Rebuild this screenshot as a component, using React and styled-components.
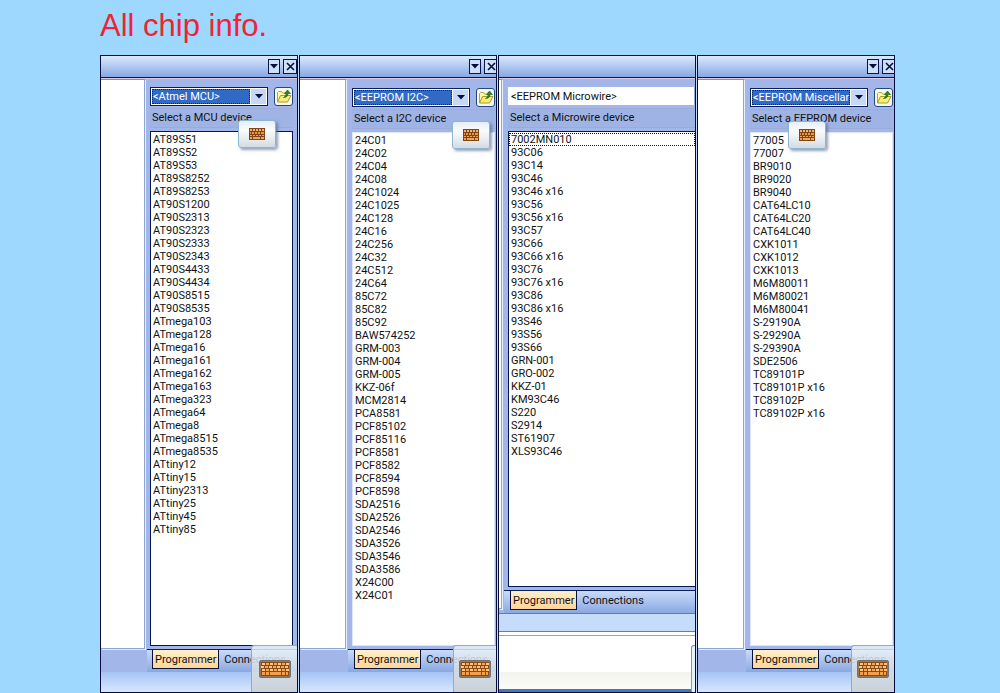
import styled, { createGlobalStyle } from 'styled-components';

const atmel = ['AT89S51', 'AT89S52', 'AT89S53', 'AT89S8252', 'AT89S8253', 'AT90S1200', 'AT90S2313', 'AT90S2323', 'AT90S2333', 'AT90S2343', 'AT90S4433', 'AT90S4434', 'AT90S8515', 'AT90S8535', 'ATmega103', 'ATmega128', 'ATmega16', 'ATmega161', 'ATmega162', 'ATmega163', 'ATmega323', 'ATmega64', 'ATmega8', 'ATmega8515', 'ATmega8535', 'ATtiny12', 'ATtiny15', 'ATtiny2313', 'ATtiny25', 'ATtiny45', 'ATtiny85'];
const i2c = ['24C01', '24C02', '24C04', '24C08', '24C1024', '24C1025', '24C128', '24C16', '24C256', '24C32', '24C512', '24C64', '85C72', '85C82', '85C92', 'BAW574252', 'GRM-003', 'GRM-004', 'GRM-005', 'KKZ-06f', 'MCM2814', 'PCA8581', 'PCF85102', 'PCF85116', 'PCF8581', 'PCF8582', 'PCF8594', 'PCF8598', 'SDA2516', 'SDA2526', 'SDA2546', 'SDA3526', 'SDA3546', 'SDA3586', 'X24C00', 'X24C01'];
const microwire = ['7002MN010', '93C06', '93C14', '93C46', '93C46 x16', '93C56', '93C56 x16', '93C57', '93C66', '93C66 x16', '93C76', '93C76 x16', '93C86', '93C86 x16', '93S46', '93S56', '93S66', 'GRN-001', 'GRO-002', 'KKZ-01', 'KM93C46', 'S220', 'S2914', 'ST61907', 'XLS93C46'];
const misc = ['77005', '77007', 'BR9010', 'BR9020', 'BR9040', 'CAT64LC10', 'CAT64LC20', 'CAT64LC40', 'CXK1011', 'CXK1012', 'CXK1013', 'M6M80011', 'M6M80021', 'M6M80041', 'S-29190A', 'S-29290A', 'S-29390A', 'SDE2506', 'TC89101P', 'TC89101P x16', 'TC89102P', 'TC89102P x16'];

const Keyboard = () => (
  <svg width="32" height="18" viewBox="0 0 32 18" aria-hidden="true">
    <rect x="0.5" y="0.5" width="31" height="17" rx="1.5" fill="#93775a" stroke="#6f7278" />
    <rect x="2" y="2" width="28" height="14" fill="#8a4a16" />
    {[0, 1, 2].map((r) =>
      [0, 1, 2, 3, 4, 5, 6].map((c) => (
        <rect key={`${r}-${c}`} x={3 + c * 4 - (r % 2)} y={3 + r * 3} width="3" height="2" fill={c % 2 ? '#f6a552' : '#ffc583'} />
      ))
    )}
    <path d="M3 12h3v3H3zM7 12h3v3H7zM11 12h11v3H11zM23 12h3v3h-3zM27 12h2v3h-2z" fill="#f2a04c" />
  </svg>
);

const SmallKeyboard = () => (
  <svg width="16" height="12" viewBox="0 0 16 12" aria-hidden="true">
    <path d="M0 0h16v12H0z" fill="#7e4518" />
    <path d="M1 1h2v2H1zM4 1h2v2H4zM7 1h2v2H7zM10 1h2v2h-2zM13 1h2v2h-2z" fill="#f5b06a" />
    <path d="M1 4h1v2H1zM3 4h2v2H3zM6 4h2v2H6zM9 4h2v2H9zM12 4h3v2h-3z" fill="#e9943f" />
    <path d="M1 7h2v1H1zM4 7h2v1H4zM7 7h2v1H7zM10 7h2v1h-2zM13 7h2v1h-2zM1 9h2v2H1zM4 9h7v2H4zM12 9h3v2h-3z" fill="#f0a458" />
  </svg>
);

const FolderIcon = () => (
  <svg width="16" height="16" viewBox="0 0 16 16" aria-hidden="true">
    <path d="M1.5 14V4.500l1-1h3l1 1.500h5v3" fill="#fff8a8" stroke="#b8a63c" />
    <path d="M1.500 14 4.500 7.500h10.500L11.500 14z" fill="#f7ee72" stroke="#ab9a30" />
    <path d="M7.500 9.500c3 0 4.500-1.500 4.500-4h2.500L11.500 2 8.500 5.500H10c0 1.500-.5 3-2.500 4z" fill="#2f8428" stroke="#19591c" strokeWidth=".6" />
  </svg>
);

const Arrow = () => (
  <svg width="8" height="5" viewBox="0 0 8 5" aria-hidden="true">
    <path d="M0 0h8L4 4.500z" fill="#00103c" />
  </svg>
);

const Cross = () => (
  <svg width="9" height="9" viewBox="0 0 9 9" aria-hidden="true">
    <path d="M1 1l7 7M8 1L1 8" stroke="#00103c" strokeWidth="1.6" />
  </svg>
);

function Programmer({ name, title, devices, shift = 0, paneWidth = 44, indent = 6, inset = 4, close = 14, keyboardAt, compact }) {
  return (
    <Panel>
      <TitleBar>
        {!compact && (
          <>
            <TitleButton $w={12} aria-label="Menu"><Arrow /></TitleButton>
            <TitleButton $w={close} $cut={close < 14} aria-label="Close"><Cross /></TitleButton>
          </>
        )}
      </TitleBar>
      <Body>
        <LeftPane $w={paneWidth} $low={compact ? 4 : 23} />
        <Main>
          <Content $shift={shift} $indent={indent} $inset={inset}>
            <Tools>
              <Combo $plain={compact}>
                <Picker id={name} $plain={compact} defaultValue={title}>
                  <option>{title}</option>
                </Picker>
                {!compact && <Drop><Arrow /></Drop>}
              </Combo>
              {!compact && <FolderButton aria-label="Open file"><FolderIcon /></FolderButton>}
            </Tools>
            <Caption htmlFor={name}>Select a {name} device</Caption>
            <List $dark={shift === 0} $open={compact}>
              {devices.map((d, i) => (
                <Device key={d} $focused={compact && i === 0}>{d}</Device>
              ))}
            </List>
          </Content>
          <Tabs $indent={indent}>
            <Tab $active>Programmer</Tab>
            <Tab>Connections</Tab>
          </Tabs>
        </Main>
      </Body>
      {compact ? (
        <Lower>
          <Strip />
          <Sheet />
        </Lower>
      ) : (
        <StatusBar />
      )}
      {keyboardAt && <FloatKey $left={keyboardAt} $shift={shift} aria-label="Keyboard"><SmallKeyboard /></FloatKey>}
      {compact ? <Sliver /> : <CornerKey $w={inset === 4 ? 46 : 43} aria-label="On-screen keyboard"><Keyboard /></CornerKey>}
    </Panel>
  );
}

const App = () => {
  return (
    <Page>
      <GlobalStyle />
      <Heading>All chip info.</Heading>
      <Panels>
        <Programmer name="MCU" title="<Atmel MCU>" devices={atmel} indent={5} keyboardAt={137} />
        <Programmer name="I2C" title="<EEPROM I2C>" devices={i2c} shift={1} paneWidth={46} inset={1} close={12} keyboardAt={152} />
        <Programmer name="Microwire" title="<EEPROM Microwire>" devices={microwire} paneWidth={3} inset={0} compact />
        <Programmer name="EEPROM" title="<EEPROM Miscellaneous>" devices={misc} shift={1} paneWidth={46} inset={1} close={12} keyboardAt={90} />
      </Panels>
    </Page>
  );
};

const GlobalStyle = createGlobalStyle`
  * {
    box-sizing: border-box;
  }
  body {
    margin: 0;
    background: #9fd8ff;
    font-family: Roboto, "Liberation Sans", sans-serif;
    font-size: 11px;
    color: #111;
  }
  button, select {
    font: inherit;
    color: inherit;
    padding: 0;
    margin: 0;
  }
`;

const Page = styled.main`
  min-height: 100vh;
  display: flex;
  flex-direction: column;
`;

const Heading = styled.h1`
  margin: 0;
  padding-left: 10%;
  height: 55px;
  font: 400 31px/52px "Liberation Sans", Arial, sans-serif;
  color: #ee2433;
`;

const Panels = styled.div`
  flex: 1;
  width: 79.5%;
  margin-left: 10%;
  display: grid;
  grid-template-columns: repeat(4, minmax(0, 1fr));
  gap: 1px;
  background: #c5daf8;
`;

const Panel = styled.section`
  position: relative;
  display: flex;
  flex-direction: column;
  overflow: hidden;
  border: 1px solid #020d3c;
  background: #a3b6ea;
`;

const TitleBar = styled.header`
  height: 22px;
  display: flex;
  justify-content: flex-end;
  align-items: center;
  gap: 3px;
  background: linear-gradient(#dce9fd, #86a8e4);
  border-bottom: 1px solid #09184c;
`;

const TitleButton = styled.button`
  width: ${({ $w }) => $w}px;
  height: 15px;
  display: flex;
  align-items: center;
  justify-content: ${({ $cut }) => ($cut ? 'flex-start' : 'center')};
  padding-left: ${({ $cut }) => ($cut ? 2 : 0)}px;
  overflow: hidden;
  background: #cfdffa;
  border: 1px solid #06154c;
  border-right-width: ${({ $cut }) => ($cut ? 0 : 1)}px;
  svg {
    flex: none;
  }
`;

const Body = styled.div`
  flex: 1;
  display: flex;
  border-top: 1px solid #dccbe0;
`;

const LeftPane = styled.div`
  flex: none;
  width: ${({ $w }) => $w}px;
  margin-bottom: ${({ $low }) => $low}px;
  background: #fff;
  border-top: 1px solid #c57b6c;
  border-right: 1px solid #8ea6cf;
  border-bottom: 1px solid #8ea6cf;
  box-shadow: 1px 1px #e9effb;
`;

const Main = styled.div`
  flex: 1;
  min-width: 0;
  display: flex;
  flex-direction: column;
`;

const Content = styled.div`
  flex: 1;
  display: flex;
  flex-direction: column;
  padding: ${({ $shift }) => 7 + $shift}px ${({ $inset }) => $inset}px 3px ${({ $indent }) => $indent}px;
`;

const Tools = styled.div`
  display: flex;
  align-items: center;
  gap: 6px;
  height: 20px;
`;

const Combo = styled.div`
  flex: 1;
  min-width: 0;
  height: ${({ $plain }) => ($plain ? 18 : 19)}px;
  display: flex;
  background: #fff;
  border: ${({ $plain }) => ($plain ? '0' : '1px solid #0a1d5c')};
  border-right: ${({ $plain }) => ($plain ? '1px solid #8fa8dc' : '1px solid #0a1d5c')};
  padding: ${({ $plain }) => ($plain ? '0' : '1px')};
`;

const Picker = styled.select`
  flex: 1;
  min-width: 0;
  appearance: none;
  outline: none;
  overflow: hidden;
  border: ${({ $plain }) => ($plain ? '0' : '1px dotted #0c2450')};
  border-radius: 0;
  padding-left: ${({ $plain }) => ($plain ? 3 : 0)}px;
  text-overflow: clip;
  color: ${({ $plain }) => ($plain ? '#111' : '#fff')};
  background: ${({ $plain }) => ($plain ? '#fff' : '#316ac5')};
`;

const Drop = styled.span`
  width: 15px;
  margin-left: 1px;
  display: grid;
  place-items: center;
  background: #c6d8f8;
`;

const FolderButton = styled.button`
  flex: none;
  width: 19px;
  height: 19px;
  display: grid;
  place-items: center;
  border: 1px solid #23477f;
  border-radius: 3px;
  background: #f6f8ee;
`;

const Caption = styled.label`
  height: 20px;
  margin: 2px 0 3px;
  padding-left: 2px;
  line-height: 18px;
  white-space: nowrap;
  border: 1px solid #9cabd9;
  border-width: 1px 0;
  background: #9fb3e5;
`;

const List = styled.ul`
  flex: 1;
  margin: 0;
  padding: 1px 0;
  list-style: none;
  background: #fff;
  border: 1px solid ${({ $dark }) => ($dark ? '#04174f' : '#dce6f6')};
  border-right-width: ${({ $open }) => ($open ? 0 : 1)}px;
`;

const Device = styled.li`
  height: 13px;
  padding-left: 2px;
  line-height: 13px;
  white-space: nowrap;
  outline: ${({ $focused }) => ($focused ? '1px dotted #111' : 'none')};
  outline-offset: -1px;
`;

const Tabs = styled.nav`
  height: 23px;
  margin-left: 2px;
  padding-left: ${({ $indent }) => $indent}px;
  display: flex;
  align-items: flex-start;
  border-top: 1px solid #0a1d5c;
  background: linear-gradient(#cadbf9, #89a8e2);
`;

const Tab = styled.button`
  flex: none;
  height: 19px;
  padding: 0 ${({ $active }) => ($active ? 2 : 5)}px;
  border: solid #06123c;
  border-width: ${({ $active }) => ($active ? '0 1px 1px' : '0')};
  background: ${({ $active }) => ($active ? 'linear-gradient(#fff0cb, #ffd596)' : 'transparent')};
`;

const StatusBar = styled.footer`
  height: 20px;
  background: linear-gradient(#a6c4f4, #d6e8ff);
`;

const Lower = styled.footer`
  height: 79px;
  display: flex;
  flex-direction: column;
  background: #fff;
  border-bottom: 3px solid #4577bd;
`;

const Strip = styled.div`
  height: 19px;
  background: #c6dcfb;
  border: solid #607bb5;
  border-width: 1px 0;
`;

const Sheet = styled.div`
  flex: 1;
  margin-top: 3px;
  border-top: 1px solid #8aa5d2;
  background: linear-gradient(#fff 36px, #f3f3ed 36px, #fbfbf8);
`;

const FloatKey = styled.button`
  position: absolute;
  left: ${({ $left }) => $left}px;
  top: ${({ $shift }) => 64 + $shift}px;
  width: 38px;
  height: 28px;
  display: grid;
  place-items: center;
  border: 1px solid #8db5d0;
  border-radius: 3px;
  background: linear-gradient(#edf5fbe6, #fafcfd 35%, #d4dce1);
  box-shadow: 2px 2px 3px #4d668c99;
`;

const CornerKey = styled.button`
  position: absolute;
  right: 0;
  bottom: 0;
  width: ${({ $w }) => $w}px;
  height: 47px;
  display: grid;
  place-items: center;
  border: 1px solid #7fb1d3;
  border-width: 1px 0 0 1px;
  border-radius: 3px 0 0 0;
  background: linear-gradient(#e5f1fad9, #d9e0e4d9 50%, #c9d0d5f2);
`;

const Sliver = styled.span`
  position: absolute;
  right: 0;
  bottom: 0;
  width: 4px;
  height: 47px;
  border: 1px solid #6a9fc8;
  border-width: 1px 0 0 1px;
  border-radius: 3px 0 0 0;
  background: #e6f1fa;
`;

export default App;
